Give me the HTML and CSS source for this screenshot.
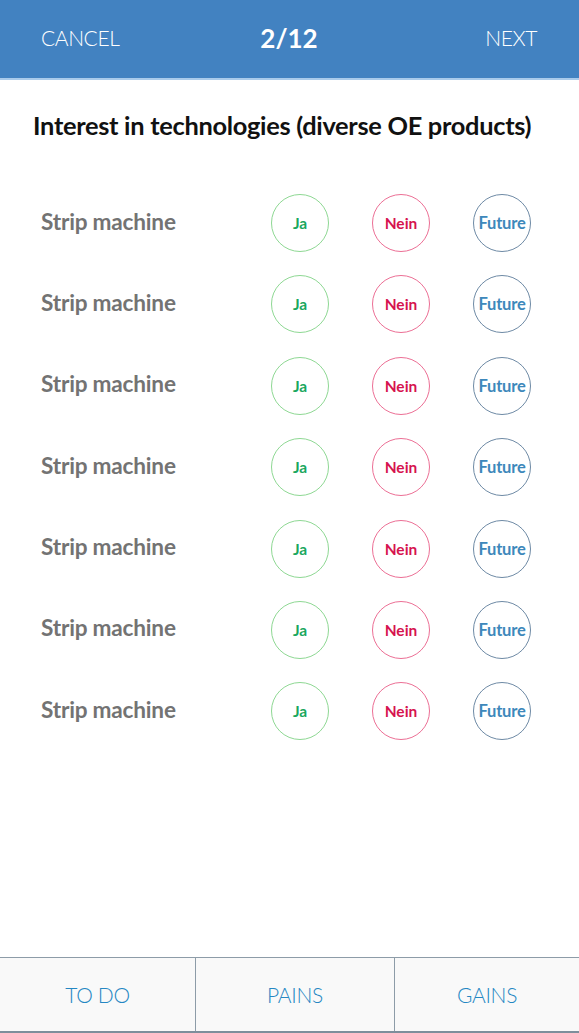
FILE: index.html
```html
<!DOCTYPE html>
<html>
<head>
<meta charset="utf-8">
<link rel="stylesheet" href="styles.css">
</head>
<body>
<div class="app">
  <header class="topbar">
    <span class="nav-btn">CANCEL</span>
    <span class="step">2/12</span>
    <span class="nav-btn nav-right">NEXT</span>
  </header>
  <main class="content">
    <h1 class="title">Interest in technologies (diverse OE products)</h1>
    <div class="rows">
      <div class="row"><span class="label">Strip machine</span><span class="opt ja">Ja</span><span class="opt nein">Nein</span><span class="opt future">Future</span></div>
      <div class="row"><span class="label">Strip machine</span><span class="opt ja">Ja</span><span class="opt nein">Nein</span><span class="opt future">Future</span></div>
      <div class="row"><span class="label">Strip machine</span><span class="opt ja">Ja</span><span class="opt nein">Nein</span><span class="opt future">Future</span></div>
      <div class="row"><span class="label">Strip machine</span><span class="opt ja">Ja</span><span class="opt nein">Nein</span><span class="opt future">Future</span></div>
      <div class="row"><span class="label">Strip machine</span><span class="opt ja">Ja</span><span class="opt nein">Nein</span><span class="opt future">Future</span></div>
      <div class="row"><span class="label">Strip machine</span><span class="opt ja">Ja</span><span class="opt nein">Nein</span><span class="opt future">Future</span></div>
      <div class="row"><span class="label">Strip machine</span><span class="opt ja">Ja</span><span class="opt nein">Nein</span><span class="opt future">Future</span></div>
    </div>
  </main>
  <footer class="tabbar">
    <span class="tab">TO DO</span>
    <span class="tab tab-mid">PAINS</span>
    <span class="tab">GAINS</span>
  </footer>
</div>
</body>
</html>
```

FILE: styles.css
```css
* { box-sizing: border-box; }
html, body { margin: 0; padding: 0; }
body {
  font-family: "Lato", "Open Sans", sans-serif;
  background: #ffffff;
  width: 579px;
  height: 1033px;
  overflow: hidden;
}
.app {
  display: flex;
  flex-direction: column;
  height: 1033px;
}
.topbar {
  height: 80px;
  background: #4282c1;
  border-bottom: 2px solid #a9cbeb;
  display: grid;
  grid-template-columns: 1fr auto 1fr;
  align-items: center;
  padding: 0 42px 3px 41px;
  color: #ffffff;
}
.nav-btn {
  font-size: 21px;
  font-weight: 300;
  letter-spacing: -0.4px;
}
.nav-right { justify-self: end; }
.step {
  font-size: 26px;
  font-weight: 700;
}
.content {
  flex: 1;
  display: flex;
  flex-direction: column;
}
.title {
  margin: 28px 0 0 0;
  padding-left: 33px;
  text-align: left;
  font-size: 25.4px;
  font-weight: 700;
  color: #111111;
  letter-spacing: -0.3px;
  line-height: 34px;
}
.rows {
  margin-top: 52px;
  display: flex;
  flex-direction: column;
  gap: 23.4px;
  padding: 0 48px 0 41px;
}
.row {
  display: grid;
  grid-template-columns: 1fr 58px 58px 58px;
  column-gap: 43px;
  align-items: center;
  height: 58px;
}
.label {
  font-size: 22.6px;
  font-weight: 700;
  color: #737373;
  margin-top: -4px;
  letter-spacing: -0.2px;
}
.opt {
  width: 58px;
  height: 58px;
  border-radius: 50%;
  display: flex;
  align-items: center;
  justify-content: center;
  font-size: 15.5px;
  font-weight: 700;
}
.ja { border: 1.5px solid #8ed893; color: #1aa760; }
.nein { border: 1.5px solid #ec6f95; color: #d6134f; }
.future { border: 1.5px solid #6e8aa5; color: #3d88bb; font-size: 16.5px; letter-spacing: -0.2px; }
.tabbar {
  height: 76px;
  background: #f9f9f9;
  border-top: 1.5px solid #8d9ca8;
  border-bottom: 2px solid #7d8e9b;
  display: grid;
  grid-template-columns: 195px 200px 1fr;
}
.tab {
  display: flex;
  align-items: center;
  justify-content: center;
  font-size: 21px;
  font-weight: 300;
  color: #2587c3;
  letter-spacing: -0.3px;
}
.tab-mid {
  border-left: 1px solid #8d9ca8;
  border-right: 1px solid #8d9ca8;
}
```
